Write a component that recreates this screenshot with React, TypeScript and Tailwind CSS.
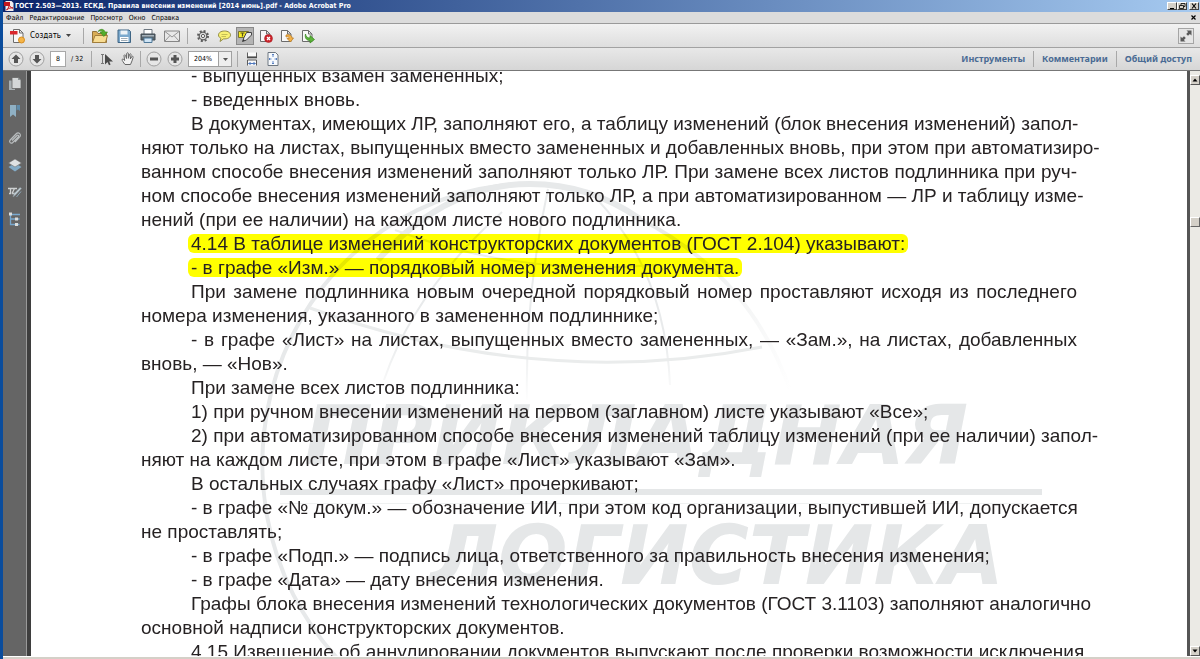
import type { ReactNode } from 'react';

type Paragraph = {
    lines: string[];
    highlight?: boolean;
};

const MENU = ['Файл', 'Редактирование', 'Просмотр', 'Окно', 'Справка'];
const TASKS = ['Инструменты', 'Комментарии', 'Общий доступ'];

const PARAGRAPHS: Paragraph[] = [
    { lines: ['- выпущенных взамен замененных;'] },
    { lines: ['- введенных вновь.'] },
    {
        lines: [
            'В документах, имеющих ЛР, заполняют его, а таблицу изменений (блок внесения изменений) запол-',
            'няют только на листах, выпущенных вместо замененных и добавленных вновь, при этом при автоматизиро-',
            'ванном способе внесения изменений заполняют только ЛР. При замене всех листов подлинника при руч-',
            'ном способе внесения изменений заполняют только ЛР, а при автоматизированном — ЛР и таблицу изме-',
            'нений (при ее наличии) на каждом листе нового подлинника.',
        ],
    },
    { lines: ['4.14 В таблице изменений конструкторских документов (ГОСТ 2.104) указывают:'], highlight: true },
    { lines: ['- в графе «Изм.» — порядковый номер изменения документа.'], highlight: true },
    {
        lines: [
            'При замене подлинника новым очередной порядковый номер проставляют исходя из последнего',
            'номера изменения, указанного в замененном подлиннике;',
        ],
    },
    {
        lines: [
            '- в графе «Лист» на листах, выпущенных вместо замененных, — «Зам.», на листах, добавленных',
            'вновь, — «Нов».',
        ],
    },
    { lines: ['При замене всех листов подлинника:'] },
    { lines: ['1) при ручном внесении изменений на первом (заглавном) листе указывают «Все»;'] },
    {
        lines: [
            '2) при автоматизированном способе внесения изменений таблицу изменений (при ее наличии) запол-',
            'няют на каждом листе, при этом в графе «Лист» указывают «Зам».',
        ],
    },
    { lines: ['В остальных случаях графу «Лист» прочеркивают;'] },
    {
        lines: [
            '- в графе «№ докум.» — обозначение ИИ, при этом код организации, выпустившей ИИ, допускается',
            'не проставлять;',
        ],
    },
    { lines: ['- в графе «Подп.» — подпись лица, ответственного за правильность внесения изменения;'] },
    { lines: ['- в графе «Дата» — дату внесения изменения.'] },
    {
        lines: [
            'Графы блока внесения изменений технологических документов (ГОСТ 3.1103) заполняют аналогично',
            'основной надписи конструкторских документов.',
        ],
    },
    { lines: ['4.15 Извещение об аннулировании документов выпускают после проверки возможности исключения'] },
];

const Icon = ({ children }: { children: ReactNode }) => (
    <svg viewBox="0 0 16 16" className="h-4 w-4 shrink-0" fill="none" aria-hidden="true">
        {children}
    </svg>
);

const IconButton = ({ label, active, children }: { label: string; active?: boolean; children: ReactNode }) => (
    <button
        type="button"
        aria-label={label}
        className={active ? 'shrink-0 bg-[#b4b4b4] outline outline-[#8a8a8a]' : 'shrink-0'}
    >
        <Icon>{children}</Icon>
    </button>
);

const Separator = () => <span className="h-4 w-px shrink-0 bg-[#a8a8a8]" />;

const PageShape = () => (
    <path d="M2.500 2.500h6l3.500 3.500v7.500h-9.500z M8.500 2.500v3.500h3.500" fill="#f8f8f8" stroke="#6c6c6c" />
);

const TitleBar = () => (
    <header className="flex h-3 shrink-0 items-center bg-linear-to-r from-[#0c246a] to-[#a6caf0] pl-px pr-px text-white">
        <svg viewBox="0 0 10 10" className="mr-px h-[10px] w-[10px] shrink-0" aria-hidden="true">
            <path d="M1.500 0h6l2 2v8h-8z" fill="#f3eeee" />
            <path d="M0 1h6v4H0z" fill="#c4161c" />
            <path d="M2.500 9c2-2 3-4 2.500-6 .5 2.500 2 4 4 4-2-.5-4 0-6.500 2z" fill="none" stroke="#c4161c" />
        </svg>
        <h1 className="truncate font-['DejaVu_Sans_Condensed','DejaVu_Sans',sans-serif] text-[7px] leading-3 font-bold">
            ГОСТ 2.503—2013. ЕСКД. Правила внесения изменений [2014 июнь].pdf - Adobe Acrobat Pro
        </h1>
        <div className="ml-auto flex shrink-0 text-black">
            <button type="button" aria-label="Свернуть" className="h-2 w-[10px] border border-t-white border-l-white border-r-[#404040] border-b-[#404040] bg-[#d4d0c8]">
                <svg viewBox="0 0 8 6" className="h-[6px] w-2"><path d="M2 5.500h4" stroke="#000" /></svg>
            </button>
            <button type="button" aria-label="Восстановить" className="h-2 w-[10px] border border-t-white border-l-white border-r-[#404040] border-b-[#404040] bg-[#d4d0c8]">
                <svg viewBox="0 0 8 6" className="h-[6px] w-2" fill="none" stroke="#000" strokeWidth=".8"><path d="M3 2.500V.5h4v3H5.500M1.500 2.500h4v3h-4z" /></svg>
            </button>
            <button type="button" aria-label="Закрыть" className="ml-0.5 h-2 w-[10px] border border-t-white border-l-white border-r-[#404040] border-b-[#404040] bg-[#d4d0c8]">
                <svg viewBox="0 0 8 6" className="h-[6px] w-2"><path d="M2 .5l4 5M6 .5l-4 5" stroke="#000" strokeWidth="1.200" /></svg>
            </button>
        </div>
    </header>
);

const MenuBar = () => (
    <nav className="flex h-3 shrink-0 items-center gap-[6px] border-b border-[#9a9a9a] bg-[#dcdcdc] pr-1 pl-[3px] font-['DejaVu_Sans_Condensed','DejaVu_Sans',sans-serif] text-[7px] leading-[10px] text-black">
        {MENU.map(item => (
            <button key={item} type="button">{item}</button>
        ))}
        <button type="button" aria-label="Закрыть документ" className="ml-auto">
            <svg viewBox="0 0 5 5" className="h-[5px] w-[5px]"><path d="M.5.5l4 4M4.500.5l-4 4" stroke="#000" strokeWidth="1.200" /></svg>
        </button>
    </nav>
);

const MainToolbar = () => (
    <div className="flex h-6 shrink-0 items-center border-b border-[#a2a2a2] bg-linear-to-b from-[#f2f2f2] to-[#dedede] pr-[6px] pl-[7px]">
        <button type="button" className="flex w-[65px] shrink-0 items-center gap-1 font-['DejaVu_Sans_Condensed','DejaVu_Sans',sans-serif] text-[8px] leading-3 text-black">
            <Icon>
                <path d="M3.500 1.500h6l3.500 3.500v9.500h-9.500z M9.500 1.500v3.500h3.500" fill="#f8f8f8" stroke="#6c6c6c" />
                <path d="M0 3h7.500v3.500H0z" fill="#d9262c" />
                <circle cx="11.500" cy="12" r="3" fill="#f5b548" stroke="#d98f22" />
            </Icon>
            Создать
            <svg viewBox="0 0 5 3" className="ml-px h-[3px] w-[5px] shrink-0"><path d="M0 0h5L2.500 3z" fill="#444" /></svg>
        </button>
        <div className="flex items-center pl-2"><Separator /></div>
        <div className="flex items-center gap-2 pr-[7px] pl-2">
            <IconButton label="Открыть">
                <path d="M.5 14.500v-11h4l1.500 2h8.500v9z" fill="#d9ad55" stroke="#93733a" />
                <path d="M.5 14.500l2.500-7h12.500l-2 7z" fill="#f8dc92" stroke="#a17e3c" />
                <path d="M6 3.500C8 .5 12 .5 13 4h2.500l-3.700 4.500L8 4h2.500C10 2.500 8 2.500 6 3.500z" fill="#55ad2d" stroke="#35871a" strokeWidth=".6" />
            </IconButton>
            <IconButton label="Сохранить">
                <path d="M2 2h11l1.500 1.500V14.500H2z" fill="#7ba9cd" stroke="#3f6584" />
                <path d="M4.500 2.500h7v4h-7z" fill="#edf3f7" />
                <path d="M4 9h8.500v5H4z" fill="#fff" />
                <path d="M5 10.500h6.500M5 12.500h6.500" stroke="#8898a4" strokeWidth=".8" />
            </IconButton>
            <IconButton label="Печать">
                <path d="M4 1.500h8v5H4z" fill="#fff" stroke="#6d7780" />
                <path d="M1 6h14v6H1z" fill="#58646d" stroke="#414b53" />
                <path d="M2 7h12v1.500H2z" fill="#a6b2bb" />
                <path d="M4 10h8v4.500H4z" fill="#cfe4f5" stroke="#4e7898" />
            </IconButton>
            <IconButton label="Электронная почта">
                <path d="M.5 3h15v10.500H.5z" fill="#e8e8e8" stroke="#868686" />
                <path d="M1 3.500l7 5.500 7-5.500M1 13l5-5.500M15 13l-5-5.500" stroke="#969696" />
            </IconButton>
        </div>
        <Separator />
        <div className="flex items-center gap-[5px] pl-[7px]">
            <IconButton label="Настройки">
                <circle cx="8" cy="8" r="5" stroke="#5b5b5b" strokeWidth="2" strokeDasharray="2 1.927" />
                <circle cx="8" cy="8" r="3.800" fill="#dcdcdc" stroke="#5b5b5b" strokeWidth="1.200" />
                <circle cx="8" cy="8" r="1.600" fill="#fff" stroke="#5b5b5b" />
            </IconButton>
            <IconButton label="Добавить заметку">
                <path d="M8.500 3C4.800 3 2.500 4.800 2.500 7c0 1.500 1 2.600 2.400 3.300L4 13.500l3.500-2.600c4 .3 7-1.400 7-3.900 0-2.200-2.300-4-6-4z" fill="#f8f173" stroke="#948f47" />
                <path d="M5.500 6.500h6M5.500 8.500h4.500" stroke="#b8b14e" strokeWidth=".8" />
            </IconButton>
            <IconButton label="Выделить текст" active>
                <path d="M1.500 3.500h10v6h-10z" fill="#f9ee28" stroke="#777330" />
                <path d="M3.500 5h4M5.500 5v3.500" stroke="#57531c" strokeWidth="1.200" />
                <path d="M9.500 4.500h5v2.500l-5 5-4 1.500 1.500-4z" fill="#ececec" stroke="#454545" />
                <path d="M5.500 13.500l1-2.500 1.500 1.500z" fill="#333" />
            </IconButton>
            <IconButton label="Удалить страницы">
                <PageShape />
                <circle cx="10.500" cy="10.500" r="4" fill="#cb242b" stroke="#a51a20" strokeWidth=".5" />
                <path d="M9 9l3 3M12 9l-3 3" stroke="#fff" strokeWidth="1.300" />
            </IconButton>
            <IconButton label="Повернуть страницы">
                <PageShape />
                <path d="M7 7c3.500-1 6 .5 6 3h1.500l-3 4-3.500-3.500h2.200c0-1.500-1.200-2-3.200-1.500z" fill="#f2b047" stroke="#b8771b" strokeWidth=".7" />
            </IconButton>
            <IconButton label="Извлечь страницы">
                <PageShape />
                <path d="M5.500 6c.5 3 2 4 4.500 4V7.500l4.500 4-4.500 3.500v-2.500C6.500 12.500 4.500 10 5.500 6z" fill="#5eb43b" stroke="#34851b" strokeWidth=".7" />
            </IconButton>
        </div>
        <button type="button" aria-label="Режим чтения" className="ml-auto shrink-0 border border-[#a5a5a5] bg-[#e6e6e6]">
            <svg viewBox="0 0 14 14" className="h-[14px] w-[14px]" aria-hidden="true">
                <path d="M7.500 1.500h5v5l-1.600-1.600L9 6.800 7.200 5 9.100 3.100zM1.500 7.500l1.600 1.600L5 7.200 6.800 9l-1.900 1.900 1.600 1.600h-5z" fill="#5a5a5a" />
            </svg>
        </button>
    </div>
);

const RoundButton = ({ label, path }: { label: string; path: string }) => (
    <IconButton label={label}>
        <circle cx="8" cy="8" r="7" fill="#e6e6e6" stroke="#a0a0a0" />
        <path d={path} fill="#555" />
    </IconButton>
);

const NavToolbar = () => (
    <div className="flex h-[23px] shrink-0 items-center border-b border-[#777] bg-linear-to-b from-[#e8e8e8] to-[#d6d6d6] pr-2 pl-[5px] font-['DejaVu_Sans_Condensed','DejaVu_Sans',sans-serif] text-[7px] text-black">
        <div className="flex items-center gap-[5px]">
            <RoundButton label="Предыдущая страница" path="M8 3.500l4.500 4.500H10v4H6V8H3.500z" />
            <RoundButton label="Следующая страница" path="M8 12.500L3.500 8H6V4h4v4h2.500z" />
            <input
                aria-label="Номер страницы"
                defaultValue="8"
                className="h-4 w-4 border border-[#a8a8a8] bg-white text-center"
            />
            <span className="w-4 whitespace-nowrap">/ 32</span>
        </div>
        <div className="flex items-center px-1"><Separator /></div>
        <div className="flex items-center gap-1 px-1">
            <IconButton label="Выделение">
                <path d="M1 3.500h3M1 12.500h3M2.500 3.500v9" stroke="#777" />
                <path d="M5 3v10.500l2.500-2.500 1.500 3.200 1.600-.8-1.400-3H13z" fill="#4a4a4a" />
            </IconButton>
            <IconButton label="Рука">
                <path d="M5 13.500C3.500 11.500 2 9.500 2 8.500c.8-.8 2 0 2.600 1L4 4.500c.5-1 1.400-.8 1.600 0L6.500 7.500l.2-5c.4-1 1.500-1 1.700 0v4.800l1.200-4c.6-.9 1.600-.5 1.500.4l-.8 4.300 1.600-2.500c.8-.7 1.500 0 1.200.9-.8 2-1.300 5-2.600 7.100z" fill="#f2f2f2" stroke="#666" />
            </IconButton>
        </div>
        <Separator />
        <div className="flex items-center gap-[5px] px-[5px]">
            <RoundButton label="Уменьшить" path="M4 6.500h8v3H4z" />
            <RoundButton label="Увеличить" path="M6.500 4h3v2.500H12v3H9.500V12h-3V9.500H4v-3h2.500z" />
            <div className="relative shrink-0">
                <select
                    aria-label="Масштаб"
                    defaultValue="204"
                    className="h-4 w-11 appearance-none border border-[#a0a0a0] bg-white pl-[5px] leading-3"
                >
                    <option value="100">100%</option>
                    <option value="204">204%</option>
                </select>
                <span className="pointer-events-none absolute top-px right-px flex h-[14px] w-[13px] items-center justify-center border-l border-[#a0a0a0] bg-[#eee]">
                    <svg viewBox="0 0 5 3" className="h-[3px] w-[5px]"><path d="M0 0h5L2.500 3z" fill="#555" /></svg>
                </span>
            </div>
        </div>
        <Separator />
        <div className="flex items-center gap-[5px] px-[6px]">
            <IconButton label="По ширине окна">
                <path d="M3.500 1.500V6h9V1.500M3.500 14.500V9h9v5.500" fill="#fafafa" stroke="#5d5d5d" />
                <path d="M3 6.500h10" stroke="#4a4a4a" strokeWidth="1.500" />
                <path d="M4.500 12.500h7M6.500 11L5 12.500 6.500 14M9.500 11l1.500 1.500L9.500 14" stroke="#4f78bd" />
            </IconButton>
            <IconButton label="По размеру страницы">
                <path d="M3 1.500h7.500L13 4v10.500H3z" fill="#f6f9fd" stroke="#6c7680" />
                <path d="M8 3v3M8 13v-3M4 8h2.500M12 8H9.500M7 4l1-1 1 1M7 12l1 1 1-1M5 7L4 8l1 1M11 7l1 1-1 1" stroke="#4f78bd" strokeWidth=".9" />
            </IconButton>
        </div>
        <div className="ml-auto flex shrink-0 items-center gap-2 font-['Noto_Sans','Open_Sans',sans-serif] text-[9px] font-bold text-[#4a6b94]">
            {TASKS.map((task, i) => (
                <div key={task} className="flex items-center gap-2">
                    {i > 0 && <Separator />}
                    <button type="button">{task}</button>
                </div>
            ))}
        </div>
    </div>
);

const SidePanel = () => (
    <aside className="flex w-7 shrink-0 flex-col items-center gap-[11px] border-r-4 border-[#3e3e3e] bg-[#656565] pt-[5px] shadow-[inset_-1px_0_#999]">
        <IconButton label="Миниатюры страниц">
            <path d="M2 4.500h6V14H2z" fill="#a9b0b3" />
            <path d="M5 1.500h6L14 4v8.500H5z" fill="#d4d7d8" stroke="#656565" strokeWidth=".8" />
            <path d="M11 1.500V4h3z" fill="#8c9294" />
        </IconButton>
        <IconButton label="Закладки">
            <path d="M3 2h6v12l-3-2.500L3 14z" fill="#8fb0c4" />
            <path d="M9.500 2H13v6l-2-1.500-1.500 1z" fill="#5f8cab" />
        </IconButton>
        <IconButton label="Вложения">
            <path d="M5 10.500l5-5c1-1 2.300.3 1.300 1.300l-5.500 5.700c-2 1.800-4.300-.5-2.600-2.500L9 4c2.700-2.700 6 .6 3.500 3.200L8 12" stroke="#b9bdbf" strokeWidth="1.200" />
        </IconButton>
        <IconButton label="Слои">
            <path d="M8 6l6.500 4L8 14.500 1.500 10z" fill="#83abc6" />
            <path d="M8 2l6.500 4L8 10 1.500 6z" fill="#dfe2e3" stroke="#656565" strokeWidth=".5" />
        </IconButton>
        <IconButton label="Подписи">
            <path d="M1 4.500h9M3.500 5v4.500H2M7.500 4.500L5 9.500M5 9.500h4" stroke="#ced1d2" strokeWidth="1.300" />
            <path d="M14.500 4.500L9 10.500l-3 2.500 1.200-3.500 5.800-6z" fill="#c4d0d7" stroke="#88949b" strokeWidth=".6" />
            <path d="M9.500 13l4.500-5.500" stroke="#8fa9b9" />
        </IconButton>
        <IconButton label="Структура">
            <path d="M3.500 3v10.500h9M3.500 8h9M5 3.500h8" stroke="#79a9cf" strokeWidth="1.300" />
            <path d="M2 1.500h3v3H2zM8 6.500h3v3H8zM8 12h3v3H8z" fill="#dadddd" />
        </IconButton>
    </aside>
);

const Watermark = () => (
    <svg viewBox="0 0 800 620" className="absolute top-0 left-[219px] -z-10 h-[620px] w-[800px]" fill="none" stroke="#eaecec" aria-hidden="true">
        <defs>
            <linearGradient id="rim" x1="0" y1="0" x2="1" y2="1">
                <stop offset="0" stopColor="#e5e7e8" />
                <stop offset="1" stopColor="#fff" />
            </linearGradient>
            <linearGradient id="meridian" gradientUnits="userSpaceOnUse" x1="0" y1="120" x2="0" y2="340">
                <stop offset="0" stopColor="#e8eaeb" />
                <stop offset=".7" stopColor="#e8eaeb" />
                <stop offset="1" stopColor="#fff" />
            </linearGradient>
        </defs>
        <path d="M88 595A268 280 0 0 1 280 120" stroke="#e7e9ea" strokeWidth="4" />
        <path d="M128 196Q196 120 280 120Q340 120 390 155" stroke="#e7e9ea" strokeWidth="6" />
        <path d="M390 155Q500 211 540 326" stroke="url(#rim)" strokeWidth="4" />
        <g stroke="url(#meridian)" strokeWidth="2">
            <path d="M298 125Q275 231 277 336" />
            <path d="M345 133Q415 206 420 321" />
            <path d="M252 148Q165 226 134 316" />
        </g>
        <path d="M60 244Q290 327 512 283" strokeWidth="3" />
        <path d="M145 166Q270 213 405 201" strokeWidth="2" />
        <g fill="#e5e7e8" stroke="none" className="font-['DejaVu_Sans',Verdana,sans-serif] text-[82px] font-bold italic">
            <text x="54" y="400">ПРИКЛАДНАЯ</text>
            <text x="180" y="520">ЛОГИСТИКА</text>
            <path d="M30 425h762v6H30z" />
            <path d="M30 439h750v1H30z" opacity=".6" />
        </g>
    </svg>
);

const DocumentPage = () => (
    <main className="min-w-0 flex-1 overflow-hidden bg-white">
        <article className="relative isolate -mt-[7px] px-[110px] font-['Liberation_Sans',Arial,sans-serif] text-[19px] leading-6 text-[#262223]">
            <Watermark />
            {PARAGRAPHS.map(({ lines, highlight }) => (
                <p key={lines[0]}>
                    {lines.map((line, i) => (
                        <span
                            key={line}
                            className={[
                                'block whitespace-nowrap',
                                i === 0 && 'indent-[50px]',
                                i < lines.length - 1 && '[text-align-last:justify]',
                            ].filter(Boolean).join(' ')}
                        >
                            {highlight ? (
                                <mark className="-mx-[3px] inline-block rounded-md bg-[#ffff00] px-[3px] indent-0 leading-[19px] text-inherit mix-blend-multiply">
                                    {line}
                                </mark>
                            ) : line}
                        </span>
                    ))}
                </p>
            ))}
        </article>
    </main>
);

const ScrollButton = ({ label, path }: { label: string; path: string }) => (
    <button
        type="button"
        aria-label={label}
        className="h-[10px] w-[10px] shrink-0 border border-t-white border-l-white border-r-[#555] border-b-[#555] bg-[#d4d0c8]"
    >
        <svg viewBox="0 0 8 8" className="h-2 w-2"><path d={path} fill="#000" /></svg>
    </button>
);

const ScrollBar = () => (
    <div className="flex w-[13px] shrink-0 flex-col border-l-3 border-[#555] bg-[#ebeae5] pt-1">
        <ScrollButton label="Вверх" path="M1.500 5.500h5L4 2.500z" />
        <div className="flex flex-1 flex-col">
            <div className="grow-[24]" />
            <div className="h-[10px] border border-t-white border-l-white border-r-[#666] border-b-[#666] bg-[#d4d0c8]" />
            <div className="grow-[76]" />
        </div>
        <ScrollButton label="Вниз" path="M1.500 2.500h5L4 5.500z" />
    </div>
);

export default function App() {
    return (
        <div className="flex h-screen flex-col overflow-hidden border-l-3 border-[#0a4c9c] bg-[#d4d0c8]">
            <TitleBar />
            <MenuBar />
            <MainToolbar />
            <NavToolbar />
            <div className="flex min-h-0 flex-1">
                <SidePanel />
                <DocumentPage />
                <ScrollBar />
            </div>
            <footer className="h-[3px] shrink-0 border-t border-white bg-[#d4d0c8]" />
        </div>
    );
}
